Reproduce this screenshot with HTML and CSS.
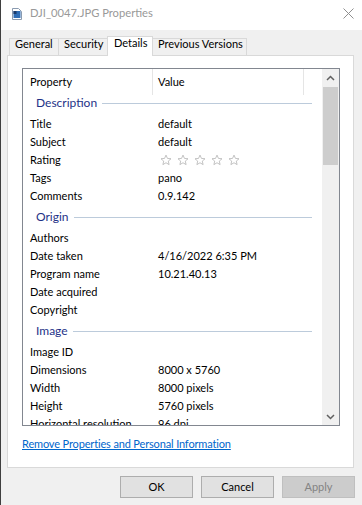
FILE: index.html
```html
<!DOCTYPE html>
<html>
<head>
<meta charset="utf-8">
<title>DJI_0047.JPG Properties</title>
<link rel="stylesheet" href="styles.css">
</head>
<body>
<div class="window">
  <div class="titlebar">
    <svg class="file-icon" viewBox="0 0 10 12" width="10" height="12">
      <path d="M0.5 0.5h6l3 3v8h-9z" fill="#fff" stroke="#8a9bb0"/>
      <rect x="1.5" y="3" width="7" height="7" fill="#2f6db5"/>
      <rect x="1.5" y="3" width="3" height="3" fill="#1a3a6a"/>
    </svg>
    <span class="title">DJI_0047.JPG Properties</span>
    <svg class="close" viewBox="0 0 11 11" width="11" height="11">
      <path d="M0.5 0.5L10.5 10.5M10.5 0.5L0.5 10.5" stroke="#8f8f8f" stroke-width="1" fill="none"/>
    </svg>
  </div>
  <div class="dialog">
    <div class="tabs">
      <div class="tab tab-general">General</div>
      <div class="tab tab-security">Security</div>
      <div class="tab tab-details active">Details</div>
      <div class="tab tab-prev">Previous Versions</div>
    </div>
    <div class="panel">
      <div class="list">
        <div class="list-main">
          <div class="list-header">
            <div class="hcell hcell-prop">Property</div>
            <div class="hcell hcell-val">Value</div>
            <div class="hcell hcell-rest"></div>
          </div>
          <div class="group first"><span class="group-name">Description</span><span class="group-line"></span></div>
          <div class="row"><span class="label">Title</span><span class="value">default</span></div>
          <div class="row"><span class="label">Subject</span><span class="value">default</span></div>
          <div class="row"><span class="label">Rating</span><span class="value stars">
            <svg class="star" viewBox="0 0 24 24"><path d="M12 2.2l2.9 6.6 7.1.7-5.4 4.7 1.6 7-6.2-3.7-6.2 3.7 1.6-7L2 9.5l7.1-.7z"/></svg>
            <svg class="star" viewBox="0 0 24 24"><path d="M12 2.2l2.9 6.6 7.1.7-5.4 4.7 1.6 7-6.2-3.7-6.2 3.7 1.6-7L2 9.5l7.1-.7z"/></svg>
            <svg class="star" viewBox="0 0 24 24"><path d="M12 2.2l2.9 6.6 7.1.7-5.4 4.7 1.6 7-6.2-3.7-6.2 3.7 1.6-7L2 9.5l7.1-.7z"/></svg>
            <svg class="star" viewBox="0 0 24 24"><path d="M12 2.2l2.9 6.6 7.1.7-5.4 4.7 1.6 7-6.2-3.7-6.2 3.7 1.6-7L2 9.5l7.1-.7z"/></svg>
            <svg class="star" viewBox="0 0 24 24"><path d="M12 2.2l2.9 6.6 7.1.7-5.4 4.7 1.6 7-6.2-3.7-6.2 3.7 1.6-7L2 9.5l7.1-.7z"/></svg>
          </span></div>
          <div class="row"><span class="label">Tags</span><span class="value">pano</span></div>
          <div class="row"><span class="label">Comments</span><span class="value">0.9.142</span></div>
          <div class="group"><span class="group-name">Origin</span><span class="group-line"></span></div>
          <div class="row"><span class="label">Authors</span><span class="value"></span></div>
          <div class="row"><span class="label">Date taken</span><span class="value">4/16/2022 6:35 PM</span></div>
          <div class="row"><span class="label">Program name</span><span class="value">10.21.40.13</span></div>
          <div class="row"><span class="label">Date acquired</span><span class="value"></span></div>
          <div class="row"><span class="label">Copyright</span><span class="value"></span></div>
          <div class="group"><span class="group-name">Image</span><span class="group-line"></span></div>
          <div class="row"><span class="label">Image ID</span><span class="value"></span></div>
          <div class="row"><span class="label">Dimensions</span><span class="value">8000 x 5760</span></div>
          <div class="row"><span class="label">Width</span><span class="value">8000 pixels</span></div>
          <div class="row"><span class="label">Height</span><span class="value">5760 pixels</span></div>
          <div class="row"><span class="label">Horizontal resolution</span><span class="value">96 dpi</span></div>
        </div>
        <div class="scrollbar">
          <div class="scroll-btn">
            <svg width="9" height="6" viewBox="0 0 9 6"><path d="M1 5L4.5 1.5L8 5" stroke="#606060" stroke-width="1.5" fill="none"/></svg>
          </div>
          <div class="thumb"></div>
          <div class="track"></div>
          <div class="scroll-btn">
            <svg width="9" height="6" viewBox="0 0 9 6"><path d="M1 1L4.5 4.5L8 1" stroke="#606060" stroke-width="1.5" fill="none"/></svg>
          </div>
        </div>
      </div>
      <a class="link" href="#">Remove Properties and Personal Information</a>
    </div>
    <div class="buttons">
      <div class="btn">OK</div>
      <div class="btn">Cancel</div>
      <div class="btn disabled">Apply</div>
    </div>
  </div>
</div>
</body>
</html>
```
FILE: styles.css
```css
* { box-sizing: border-box; }
html, body { margin: 0; padding: 0; }
body {
  font-family: Lato, "Liberation Sans", sans-serif;
  font-size: 11px;
  color: #000;
  background: #f0f0f0;
}
.window {
  width: 362px;
  height: 505px;
  border-left: 1px solid #3f3f3f;
  background: #f0f0f0;
  overflow: hidden;
  display: flex;
  flex-direction: column;
}
.titlebar {
  height: 30px;
  flex: none;
  background: #fff;
  display: flex;
  align-items: flex-start;
  padding: 0 8px 0 11px;
}
.file-icon { flex: none; margin-top: 8px; }
.title {
  flex: 1;
  margin-left: 8px;
  margin-top: 6px;
  font-size: 11.2px;
  line-height: 14px;
  color: #999;
}
.close { flex: none; margin-top: 8px; }

.dialog {
  flex: 1;
  display: flex;
  flex-direction: column;
  padding: 6px 8px 0 6px;
}
.tabs {
  display: flex;
  align-items: flex-end;
  height: 20px;
  padding-left: 2px;
  margin-bottom: -1px;
  position: relative;
  z-index: 1;
}
.tab {
  height: 17px;
  margin-bottom: 1px;
  border: 1px solid #d9d9d9;
  border-bottom: none;
  background: #f0f0f0;
  padding-left: 5px;
  line-height: 10px;
  white-space: nowrap;
}
.tab + .tab { margin-left: -1px; }
.tab-general { width: 50px; }
.tab-security { width: 50px; }
.tab-details { width: 46px; padding-left: 6px; }
.tab-prev { width: 95px; }
.tab.active {
  height: 20px;
  margin-bottom: 0;
  background: #fff;
  line-height: 12px;
  position: relative;
  z-index: 2;
}

.panel {
  height: 413px;
  flex: none;
  background: #fff;
  border: 1px solid #d9d9d9;
  padding: 12px 13px 0 14px;
  display: flex;
  flex-direction: column;
}
.list {
  height: 358px;
  flex: none;
  border: 1px solid #828790;
  display: flex;
}
.list-main {
  flex: 1;
  overflow: hidden;
}
.list-header {
  display: grid;
  grid-template-columns: 130px 151px 1fr;
  height: 26px;
}
.hcell {
  line-height: 26px;
  white-space: nowrap;
}
.hcell-prop { padding-left: 7px; border-right: 1px solid #e5e5e5; }
.hcell-val { padding-left: 5px; border-right: 1px solid #e5e5e5; }

.group {
  height: 19px;
  display: flex;
  align-items: flex-start;
  padding: 1px 10px 0 13px;
  margin-top: 5px;
}
.group.first { margin-top: 0; }
.group-name {
  font-size: 12px;
  line-height: 14px;
  color: #1e3287;
}
.group-line {
  flex: 1;
  height: 1px;
  margin-top: 7px;
  margin-left: 5px;
  background: #bccbdb;
}
.row {
  display: grid;
  grid-template-columns: 135px 1fr;
  height: 18px;
  padding-top: 1px;
  line-height: 18px;
  white-space: nowrap;
}
.label { padding-left: 7px; }
.stars {
  display: flex;
  align-items: center;
  gap: 5px;
  padding-left: 2px;
}
.star {
  width: 12px;
  height: 12px;
  fill: none;
  stroke: #b4b4b4;
  stroke-width: 1.6;
}

.scrollbar {
  width: 17px;
  flex: none;
  background: #f0f0f0;
  display: flex;
  flex-direction: column;
}
.scroll-btn {
  height: 17px;
  flex: none;
  display: flex;
  align-items: center;
  justify-content: center;
}
.thumb {
  height: 78px;
  flex: none;
  margin: 1px 1px 0;
  background: #cdcdcd;
}
.track { flex: 1; }

.link {
  align-self: flex-start;
  margin-top: 11px;
  line-height: 13px;
  letter-spacing: -0.15px;
  color: #0066cc;
  text-decoration: underline;
}

.buttons {
  display: flex;
  justify-content: flex-end;
  gap: 8px;
  margin-top: 8px;
  margin-right: -1px;
}
.btn {
  width: 73px;
  height: 22px;
  border: 1px solid #adadad;
  background: #e1e1e1;
  text-align: center;
  line-height: 20px;
}
.btn.disabled {
  border-color: #bfbfbf;
  background: #cccccc;
  color: #838383;
}
```
